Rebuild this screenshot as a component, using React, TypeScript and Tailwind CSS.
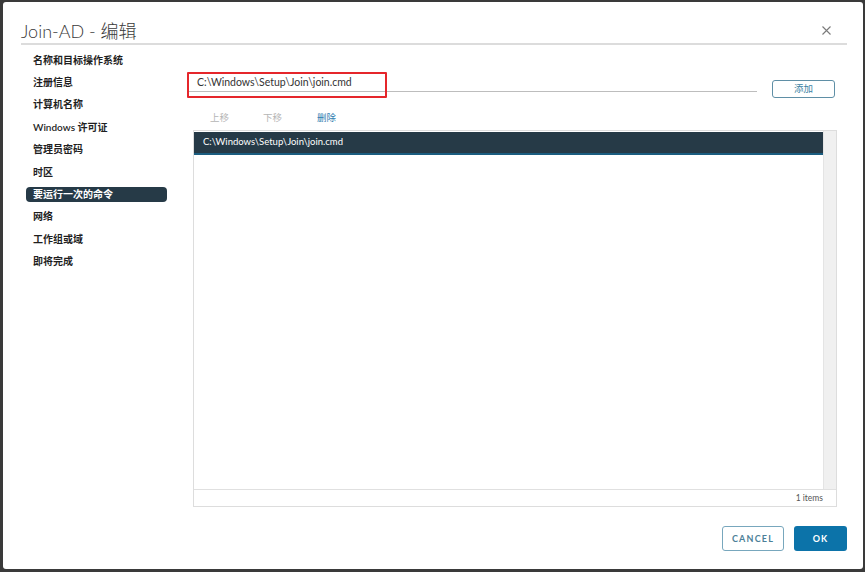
import React from "react";

const FONT = { fontFamily: '"Lato", "Noto Sans CJK SC", sans-serif' };

const navItems = [
  "名称和目标操作系统",
  "注册信息",
  "计算机名称",
  "Windows 许可证",
  "管理员密码",
  "时区",
  "要运行一次的命令",
  "网络",
  "工作组或域",
  "即将完成",
];

export default function App() {
  return (
    <div
      className="w-[865px] h-[572px] bg-[#3a3a3a] pt-[2px] pl-[3px] pr-[2px] pb-[3px] overflow-hidden"
      style={FONT}
    >
      <div className="relative bg-white h-full rounded-[3px] flex flex-col pl-[18px] pr-[16px]">
        {/* Header */}
        <div className="flex items-center h-[43px] border-b-[2px] border-[#dcdcdc] pt-[16px] pr-[16px]">
          <div className="flex-1 text-[18px] font-light text-[#3a3a3a] leading-none">
            Join-AD - 编辑
          </div>
          <svg width="9" height="9" viewBox="0 0 9 9" className="text-[#7a7a7a]">
            <path d="M0.5 0.5 L8.5 8.5 M8.5 0.5 L0.5 8.5" stroke="currentColor" strokeWidth="1.1" />
          </svg>
        </div>

        {/* Body */}
        <div className="flex flex-1 min-h-0">
          {/* Nav */}
          <div className="w-[167px] pl-[5px] pt-[4px] shrink-0">
            {navItems.map((t) => {
              const active = t === "要运行一次的命令";
              return (
                <div key={t} className="h-[22.4px] flex items-center">
                  <div
                    className={
                      active
                        ? "w-[141px] h-[15px] rounded-[4px] bg-[#263a47] text-white text-[10px] font-semibold pl-[7px] flex items-center"
                        : "pl-[7px] text-[10px] font-semibold text-[#1f1f1f]"
                    }
                  >
                    {t}
                  </div>
                </div>
              );
            })}
          </div>

          {/* Right panel */}
          <div className="flex-1 pt-[27px] flex flex-col">
            {/* Input row */}
            <div className="flex items-start h-[26px] relative">
              <div className="w-[569px] h-[20px] border-b border-[#bdbdbd] flex items-center pl-[9px] pt-[3px] text-[10.5px] text-[#333]">
                C:\Windows\Setup\Join\join.cmd
              </div>
              <div className="ml-[15px] mt-[8px] w-[63px] h-[18px] rounded-[3px] border border-[#5f8fa6] flex items-center justify-center text-[9.5px] text-[#3b7fa3]">
                添加
              </div>
              <div className="absolute left-[-1px] top-0 w-[200px] h-[26px] border-2 border-[#e5262b] rounded-[1px]" />
            </div>

            {/* Toolbar */}
            <div className="h-[32px] flex items-center pt-[9px] pl-[22px] text-[9.5px]">
              <span className="text-[#b5b5b5] w-[53px]">上移</span>
              <span className="text-[#b5b5b5] w-[54px]">下移</span>
              <span className="text-[#2f7db0]">删除</span>
            </div>

            {/* Table */}
            <div className="ml-[5px] mr-[10px] h-[377px] border border-[#dddddd] flex flex-col">
              <div className="flex flex-1 min-h-0">
                <div className="flex-1 pt-[1px]">
                  <div className="h-[23px] bg-[#263a47] text-white text-[9.5px] flex items-center pl-[9px] border-b-[2px] border-[#1b5d80]">
                    C:\Windows\Setup\Join\join.cmd
                  </div>
                </div>
                <div className="w-[13px] bg-[#f0f0f0] border-l border-[#e4e4e4]" />
              </div>
              <div className="h-[17px] border-t border-[#e0e0e0] flex items-center justify-end pr-[13px] text-[8.5px] text-[#555]">
                1 items
              </div>
            </div>
          </div>
        </div>

        {/* Footer */}
        <div className="flex justify-end items-center gap-[10px] pb-[18px] pt-[6px]">
          <div className="w-[62px] h-[25px] rounded-[3px] border-[1.5px] border-[#78a7bd] flex items-center justify-center text-[9px] font-bold tracking-[1.2px] text-[#4c7f98]">
            CANCEL
          </div>
          <div className="w-[53px] h-[25px] rounded-[3px] bg-[#0c73a9] flex items-center justify-center text-[9px] font-bold tracking-[1px] text-white">
            OK
          </div>
        </div>
      </div>
    </div>
  );
}
